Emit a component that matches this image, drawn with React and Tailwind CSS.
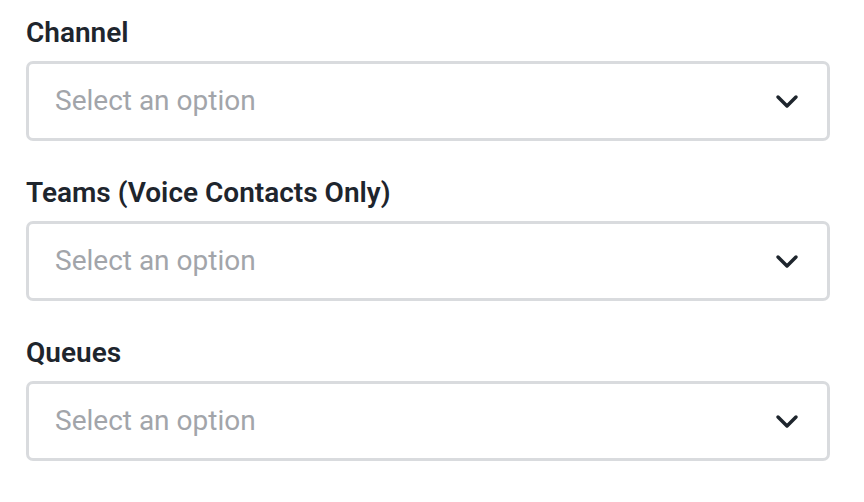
const fields = ["Channel", "Teams (Voice Contacts Only)", "Queues"];

function Chevron() {
  return (
    <svg width="24" height="16" viewBox="0 0 24 16" fill="none" className="text-[#1e252d]">
      <path
        d="M3 4 L12 13 L21 4"
        stroke="currentColor"
        strokeWidth="3.5"
        strokeLinecap="round"
        strokeLinejoin="round"
      />
    </svg>
  );
}

function SelectField({ label }) {
  return (
    <div className="flex flex-col gap-[12px]">
      <label className="text-[28px] leading-[32px] font-semibold text-[#1e252d]">
        {label}
      </label>
      <div className="flex h-[80px] items-center justify-between rounded-[7px] border-[3px] border-[#d9dbde] bg-white pl-[26px] pr-[28px]">
        <span className="text-[28px] text-[#a2a5aa]">Select an option</span>
        <Chevron />
      </div>
    </div>
  );
}

export default function App() {
  return (
    <div
      className="min-h-[502px] w-[864px] bg-white pt-[17px] pl-[26px] pr-[34px]"
      style={{ fontFamily: "Roboto, 'Liberation Sans', sans-serif" }}
    >
      <div className="flex flex-col gap-[36px]">
        {fields.map((f) => (
          <SelectField key={f} label={f} />
        ))}
      </div>
    </div>
  );
}
